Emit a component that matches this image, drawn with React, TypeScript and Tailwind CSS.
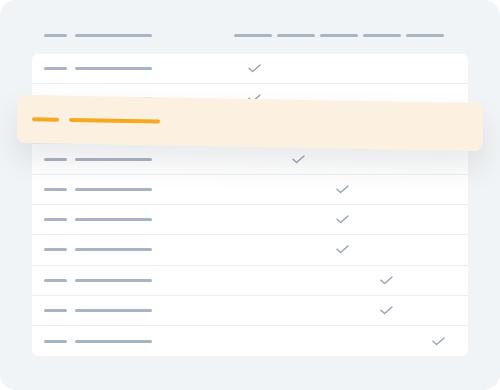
import React from 'react';

// column index (0-4) that holds the check for each row; row 3 sits under the highlight card
const rows = [0, 0, 1, 1, 2, 2, 2, 3, 3, 4];

function CheckMark() {
  return (
    <svg width="13" height="9" viewBox="0 0 13 9" fill="none">
      <polyline
        points="1,4.2 4.6,7.6 12,1"
        stroke="#97a3b2"
        strokeWidth="1.4"
        strokeLinecap="round"
        strokeLinejoin="round"
      />
    </svg>
  );
}

function Bar({ w, color = 'bg-[#a9b4c2]' }: { w: string; color?: string }) {
  return <div className={`h-[3px] rounded-full ${w} ${color}`} />;
}

export default function App() {
  return (
    <div className="w-[500px] h-[390px] bg-white">
      <div className="relative w-[500px] h-[390px] rounded-2xl bg-[#f1f4f6] px-8 pt-[34px]">
        {/* Header */}
        <div className="flex items-center h-[3px]">
          <div className="flex items-center gap-2 pl-3">
            <Bar w="w-[23px]" />
            <Bar w="w-[77px]" />
          </div>
          <div className="ml-[82px] flex items-center gap-[5px]">
            <Bar w="w-[38px]" />
            <Bar w="w-[38px]" />
            <Bar w="w-[38px]" />
            <Bar w="w-[38px]" />
            <Bar w="w-[38px]" />
          </div>
        </div>

        {/* Table */}
        <div className="mt-[16.5px] w-[436px] rounded-md bg-white overflow-hidden">
          {rows.map((col, i) => (
            <div
              key={i}
              className={`flex items-center h-[30.3px] ${i < rows.length - 1 ? 'border-b border-[#eceff2]' : ''}`}
            >
              <div className="flex items-center gap-2 pl-3 w-[200px]">
                <Bar w="w-[23px]" />
                <Bar w="w-[77px]" />
              </div>
              <div className="grid grid-cols-[44px_44px_44px_44px_60px]">
                {[0, 1, 2, 3, 4].map((c) => (
                  <div key={c} className="flex justify-center">
                    {c === col && <CheckMark />}
                  </div>
                ))}
              </div>
            </div>
          ))}
        </div>

        {/* Highlighted row card */}
        <div className="absolute left-[17px] top-[99px] w-[466px] h-[48px] rotate-1 rounded-lg bg-[#fcf1e1] shadow-[0_16px_30px_rgba(30,41,59,0.1)] flex items-center pl-[15px] gap-[10px]">
          <div className="h-[3.5px] w-[27px] rounded-full bg-[#f6a821]" />
          <div className="h-[3.5px] w-[91px] rounded-full bg-[#f6a821]" />
        </div>
      </div>
    </div>
  );
}
